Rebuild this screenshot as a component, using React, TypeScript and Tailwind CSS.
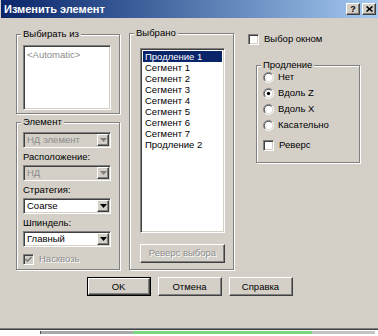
import clsx from "clsx";
import { PropsWithChildren } from "react";

const raised =
  "border border-t-white border-l-white border-r-[#404040] border-b-[#404040] shadow-[inset_-1px_-1px_0_#808080,inset_1px_1px_0_#d4d0c8]";
const sunken =
  "border border-t-[#808080] border-l-[#808080] border-r-white border-b-white shadow-[inset_1px_1px_0_#404040,inset_-1px_-1px_0_#d4d0c8]";

const Arrow = ({ disabled }: { disabled?: boolean }) => (
  <svg width="7" height="4" viewBox="0 0 7 4">
    <path d="M0 0h7L3.5 4z" fill={disabled ? "#808080" : "#000"} />
  </svg>
);

const Combo = ({ value, disabled }: { value: string; disabled?: boolean }) => (
  <div
    className={clsx(
      "flex h-[16px] w-[88px] p-[1px]",
      sunken,
      disabled ? "bg-[#d4d0c8]" : "bg-white"
    )}
  >
    <span
      className={clsx(
        "flex-1 truncate pl-[2px] leading-[12px]",
        disabled ? "text-[#8c8c8c]" : "text-black"
      )}
    >
      {value}
    </span>
    <span
      className={clsx(
        "flex w-[12px] items-center justify-center bg-[#d4d0c8]",
        raised
      )}
    >
      <Arrow disabled={disabled} />
    </span>
  </div>
);

const Group = ({
  label,
  className,
  children,
}: PropsWithChildren<{ label: string; className?: string }>) => (
  <fieldset
    className={clsx(
      "min-w-0 border border-[#808080] shadow-[inset_1px_1px_0_#fff,1px_1px_0_#fff]",
      className
    )}
  >
    <legend className="ml-[4px] bg-[#d4d0c8] px-[2px] leading-[12px]">
      {label}
    </legend>
    {children}
  </fieldset>
);

const Check = ({
  label,
  checked,
  disabled,
  className,
}: {
  label: string;
  checked?: boolean;
  disabled?: boolean;
  className?: string;
}) => (
  <div className={clsx("flex h-[12px] items-center", className)}>
    <span
      className={clsx(
        "flex h-[11px] w-[11px] items-center justify-center",
        sunken,
        disabled ? "bg-[#d4d0c8]" : "bg-white"
      )}
    >
      {checked && (
        <svg width="7" height="7" viewBox="0 0 7 7">
          <path
            d="M0.5 3l2 2 4-4"
            stroke={disabled ? "#808080" : "#000"}
            strokeWidth="1.6"
            fill="none"
          />
        </svg>
      )}
    </span>
    <span
      className={clsx(
        "ml-[5px] leading-[12px]",
        disabled && "text-[#8c8c8c] [text-shadow:1px_1px_0_#fff]"
      )}
    >
      {label}
    </span>
  </div>
);

const Radio = ({ label, checked }: { label: string; checked?: boolean }) => (
  <div className="flex h-[12px] items-center">
    <svg width="11" height="11" viewBox="0 0 12 12">
      <circle cx="6" cy="6" r="5" fill="#fff" />
      <path d="M2.1 9.9A5.5 5.5 0 0 1 9.9 2.1" stroke="#808080" fill="none" />
      <path d="M2.1 9.9A5.5 5.5 0 0 0 9.9 2.1" stroke="#fff" fill="none" />
      <path d="M2.8 9.2A4.5 4.5 0 0 1 9.2 2.8" stroke="#404040" fill="none" />
      <path d="M2.8 9.2A4.5 4.5 0 0 0 9.2 2.8" stroke="#d4d0c8" fill="none" />
      {checked && <circle cx="6" cy="6" r="1.8" fill="#000" />}
    </svg>
    <span className="ml-[4px] leading-[12px]">{label}</span>
  </div>
);

const Button = ({
  children,
  isDefault,
}: PropsWithChildren<{ isDefault?: boolean }>) => (
  <div
    className={clsx(
      "h-[19px] w-[64px]",
      isDefault && "border border-black"
    )}
  >
    <div
      className={clsx(
        "flex h-full w-full items-center justify-center bg-[#d4d0c8] leading-none",
        raised
      )}
    >
      {children}
    </div>
  </div>
);

const selected = [
  "Продление 1",
  "Сегмент 1",
  "Сегмент 2",
  "Сегмент 3",
  "Сегмент 4",
  "Сегмент 5",
  "Сегмент 6",
  "Сегмент 7",
  "Продление 2",
];

export default function App() {
  return (
    <div className="flex h-[336px] w-[378px] flex-col bg-white font-['Liberation_Sans',Arial,sans-serif] text-[9.5px] text-black">
      <div className="flex flex-col border-b border-b-[#404040] bg-[#d4d0c8] pl-[1px] shadow-[inset_0_-1px_0_#808080]">
        {/* title bar */}
        <div className="flex h-[18px] items-center bg-linear-to-r from-[#0a246a] to-[#a6caf0] pl-[3px] pr-[2px]">
          <span className="flex-1 text-[11px] font-bold leading-none text-white">
            Изменить элемент
          </span>
          <div
            className={clsx(
              "flex h-[12px] w-[14px] items-center justify-center bg-[#d4d0c8] text-[9px] font-bold leading-none",
              raised
            )}
          >
            ?
          </div>
          <div
            className={clsx(
              "ml-[2px] flex h-[12px] w-[14px] items-center justify-center bg-[#d4d0c8]",
              raised
            )}
          >
            <svg width="7" height="6" viewBox="0 0 7 6">
              <path d="M0.5 0.5l6 5M6.5 0.5l-6 5" stroke="#000" strokeWidth="1.6" />
            </svg>
          </div>
        </div>

        {/* body */}
        <div className="flex h-[311px] flex-col pt-[9px]">
          <div className="flex items-start pl-[15px]">
            {/* left column */}
            <div className="mt-[1px] flex w-[104px] flex-col">
              <Group label="Выбирать из" className="pb-[3px]">
                <div className="pl-[6px] pt-[5px]">
                  <div className={clsx("h-[65px] w-[88px] bg-white px-[3px] py-[2px]", sunken)}>
                    <span className="leading-[11px] text-[#8c8c8c]">&lt;Automatic&gt;</span>
                  </div>
                </div>
              </Group>
              <Group label="Элемент" className="mt-[2px] pb-[4px]">
                <div className="flex flex-col pl-[6px] pt-[4px]">
                  <Combo value="НД элемент" disabled />
                  <span className="mt-[3px] leading-[12px]">Расположение:</span>
                  <div className="mt-[2px]">
                    <Combo value="НД" disabled />
                  </div>
                  <span className="mt-[3px] leading-[12px]">Стратегия:</span>
                  <div className="mt-[2px]">
                    <Combo value="Coarse" />
                  </div>
                  <span className="mt-[3px] leading-[12px]">Шпиндель:</span>
                  <div className="mt-[2px]">
                    <Combo value="Главный" />
                  </div>
                  <Check label="Насквозь" checked disabled className="mt-[6px]" />
                </div>
              </Group>
            </div>

            {/* middle column */}
            <div className="ml-[9px] flex w-[105px] flex-col">
              <Group label="Выбрано" className="pb-[6px]">
                <div className="flex flex-col pl-[10px] pt-[9px]">
                  <div className={clsx("h-[185px] w-[85px] bg-white p-[2px]", sunken)}>
                    {selected.map((s, i) => (
                      <div
                        key={s}
                        className={clsx(
                          "h-[11px] pl-[2px] leading-[11px]",
                          i === 0 && "bg-[#0a246a] text-white"
                        )}
                      >
                        {s}
                      </div>
                    ))}
                  </div>
                  <div
                    className={clsx(
                      "mt-[11px] flex h-[19px] w-[85px] items-center justify-center bg-[#d4d0c8] text-[#8c8c8c] [text-shadow:1px_1px_0_#fff]",
                      raised
                    )}
                  >
                    Реверс выбора
                  </div>
                </div>
              </Group>
            </div>

            {/* right column */}
            <div className="ml-[14px] flex flex-col">
              <Check label="Выбор окном" className="mt-[6px]" />
              <Group label="Продление" className="ml-[8px] mt-[14px] w-[104px] pb-[11px]">
                <div className="flex flex-col gap-[4px] pl-[6px]">
                  <Radio label="Нет" />
                  <Radio label="Вдоль Z" checked />
                  <Radio label="Вдоль X" />
                  <Radio label="Касательно" />
                  <Check label="Реверс" className="mt-[4px]" />
                </div>
              </Group>
            </div>
          </div>

          {/* buttons */}
          <div className="mt-[7px] flex justify-center gap-[7px]">
            <Button isDefault>OK</Button>
            <Button>Отмена</Button>
            <Button>Справка</Button>
          </div>
        </div>
      </div>

      {/* strip below the dialog */}
      <div className="mt-[1px] flex h-[3px]">
        <div className="w-[40px] bg-white" />
        <div className="w-[93px] border-l border-l-[#505050] bg-[#a8a8a8]" />
        <div className="w-[179px] bg-[#7ed77e]" />
        <div className="w-[63px] bg-[#c4c4c4]" />
      </div>
    </div>
  );
}
